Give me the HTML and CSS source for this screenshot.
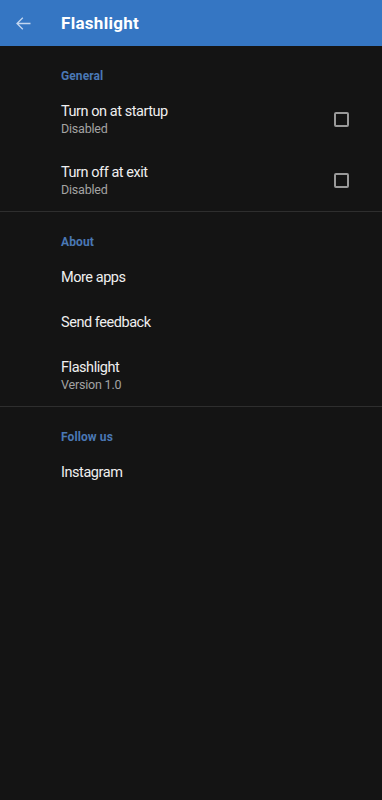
FILE: index.html
```html
<!DOCTYPE html>
<html>
<head>
<meta charset="utf-8">
<link rel="stylesheet" href="styles.css">
</head>
<body>
<header class="appbar">
  <span class="back">
    <svg width="15" height="13" viewBox="0 0 15 13"><path d="M14.5 6.5H1M6.8 0.8L1 6.5l5.8 5.7" fill="none" stroke="#c3d6f0" stroke-width="1.3"/></svg>
  </span>
  <h1 class="title">Flashlight</h1>
</header>
<main>
  <section class="group">
    <div class="cat">General</div>
    <div class="item two">
      <div class="text"><div class="primary">Turn on at startup</div><div class="secondary">Disabled</div></div>
      <span class="check"></span>
    </div>
    <div class="item two">
      <div class="text"><div class="primary">Turn off at exit</div><div class="secondary">Disabled</div></div>
      <span class="check"></span>
    </div>
  </section>
  <section class="group">
    <div class="cat">About</div>
    <div class="item one"><div class="text"><div class="primary">More apps</div></div></div>
    <div class="item one"><div class="text"><div class="primary">Send feedback</div></div></div>
    <div class="item two"><div class="text"><div class="primary">Flashlight</div><div class="secondary">Version 1.0</div></div></div>
  </section>
  <section class="group last">
    <div class="cat">Follow us</div>
    <div class="item one"><div class="text"><div class="primary">Instagram</div></div></div>
  </section>
</main>
</body>
</html>
```
FILE: styles.css
```css
html, body { margin: 0; padding: 0; }
body {
  background: #141414;
  font-family: Roboto, "Open Sans", sans-serif;
  width: 382px;
  min-height: 800px;
}
.appbar {
  height: 46px;
  background: #3576c3;
  display: flex;
  align-items: center;
}
.back {
  width: 61px;
  display: flex;
  padding-left: 16px;
  box-sizing: border-box;
}
.back svg { display: block; }
.title {
  margin: 0;
  font-size: 17px;
  font-weight: 700;
  letter-spacing: 0.3px;
  color: #fff;
}
.group { border-bottom: 1px solid #2e2e2e; }
.group.last { border-bottom: none; }
.cat {
  padding: 23px 0 6px 61px;
  height: 14px;
  font-size: 12px;
  font-weight: 700;
  letter-spacing: 0.1px;
  color: #4a78b4;
  line-height: 14px;
}
.item {
  display: flex;
  align-items: center;
  padding-left: 61px;
  padding-right: 33px;
}
.item.two { height: 61px; }
.item.one { height: 45px; }
.text { flex: 1; }
.primary { font-size: 14.5px; letter-spacing: -0.45px; color: #efefef; line-height: 18px; }
.secondary { font-size: 12.5px; letter-spacing: -0.2px; color: #a3a3a3; line-height: 16px; }
.check {
  width: 11px;
  height: 11px;
  border: 2px solid #9a9a9a;
  border-radius: 2px;
}
```
